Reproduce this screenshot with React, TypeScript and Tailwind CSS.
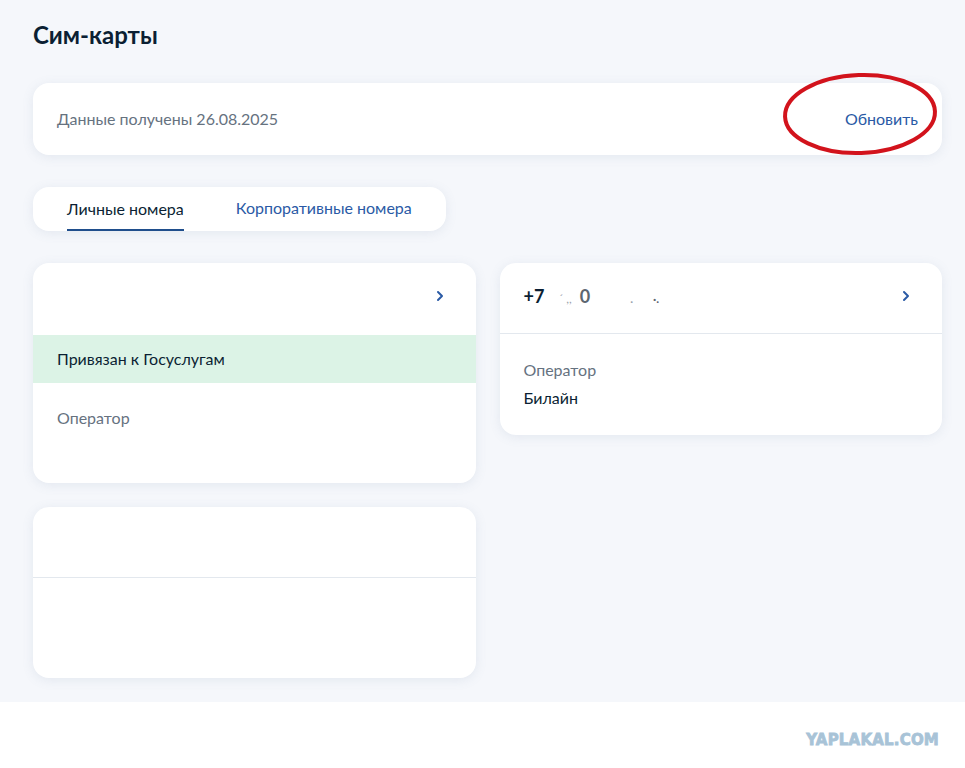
import React from 'react';

const Chevron = () => (
  <svg width="8" height="12" viewBox="0 0 8 12" fill="none" aria-hidden="true">
    <path d="M2 2l4 4-4 4" stroke="#2a5aa5" strokeWidth="2" strokeLinecap="round" strokeLinejoin="round" />
  </svg>
);

const cardCls = 'rounded-2xl bg-white shadow-[0_2px_12px_rgba(95,120,160,0.12)]';

const App = () => {
  return (
    <div className="min-h-[768px] bg-white font-['Lato','Noto_Sans',sans-serif]">
      <div className="h-[702px] bg-[#f5f7fb] px-[33px] pt-[19px]">
        <div className="w-[909px]">
          <h1 className="text-[24px] font-bold leading-[32px] text-[#0b1f33]">Сим-карты</h1>

          <div className={`relative mt-[32px] flex h-[72px] items-center justify-between px-6 ${cardCls}`}>
            <span className="text-[16px] text-[#66727f]">Данные получены 26.08.2025</span>
            <span className="text-[16px] text-[#2a5aa5]">Обновить</span>
            <svg
              className="pointer-events-none absolute left-[748px] top-[-12px]"
              width="160"
              height="86"
              viewBox="0 0 160 86"
              fill="none"
              aria-hidden="true"
            >
              <ellipse cx="79" cy="43" rx="75" ry="39" stroke="#d2131c" strokeWidth="4" transform="rotate(-2 79 43)" />
            </svg>
          </div>

          <div className={`mt-[32px] inline-flex h-[44px] items-stretch gap-[52px] pl-[34px] pr-[34px] ${cardCls}`}>
            <div className="flex flex-col justify-center border-b-2 border-[#1f4e8c] pt-[2px] text-[16px] text-[#0b1f33]">
              Личные номера
            </div>
            <div className="flex flex-col justify-center pb-[2px] text-[16px] text-[#2a5aa5]">Корпоративные номера</div>
          </div>

          <div className="mt-[32px] grid grid-cols-2 items-start gap-6">
            <div className="flex flex-col gap-6">
              <div className={`overflow-hidden ${cardCls}`}>
                <div className="flex h-[72px] items-center justify-end pr-[32px] pb-[6px]">
                  <Chevron />
                </div>
                <div className="flex h-[48px] items-center bg-[#dcf3e6] px-6 text-[16px] text-[#0b1f33]">
                  Привязан к Госуслугам
                </div>
                <div className="h-[100px] px-6 pt-[23px] text-[16px] leading-[24px] text-[#66727f]">Оператор</div>
              </div>

              <div className={`overflow-hidden ${cardCls}`}>
                <div className="h-[71px] border-b border-[#e3e8ee]" />
                <div className="h-[100px]" />
              </div>
            </div>

            <div className={`overflow-hidden ${cardCls}`}>
              <div className="flex h-[71px] items-center justify-between border-b border-[#e3e8ee] pl-6 pr-[32px] pb-[4px]">
                <span className="flex items-baseline text-[18px] font-bold text-[#0b1f33]">
                  +7
                  <span className="ml-[14px] text-[12px] font-normal text-[#9aa3ad]">´ ,, </span>
                  <span className="ml-[8px] text-[#5c6670]">0</span>
                  <span className="ml-[40px] text-[12px] text-[#9aa3ad]">.</span>
                  <span className="ml-[20px] text-[12px] text-[#5c6670]">·.</span>
                </span>
                <Chevron />
              </div>
              <div className="px-6 pt-[24px] pb-[25px] text-[16px] leading-[24px]">
                <div className="text-[#66727f]">Оператор</div>
                <div className="mt-[4px] text-[#0b1f33]">Билайн</div>
              </div>
            </div>
          </div>
        </div>
      </div>

      <div className="flex justify-end pr-[26px] pt-[27px]">
        <span className="font-['DejaVu_Sans',sans-serif] text-[15px] font-bold tracking-[0.2px] text-[#a8c3d7] [-webkit-text-stroke:0.8px_#a8c3d7]">
          YAPLAKAL.COM
        </span>
      </div>
    </div>
  );
};

export default App;
